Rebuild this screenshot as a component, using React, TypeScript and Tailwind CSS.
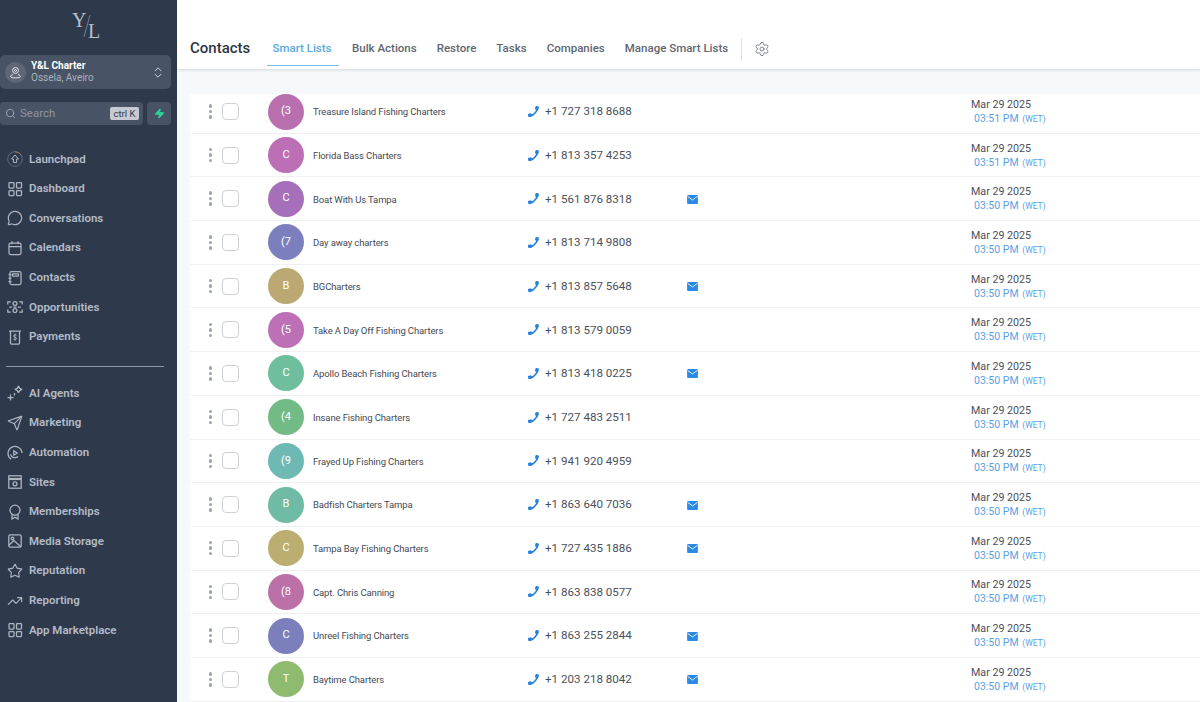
import React from 'react'
import { ChevronsUpDown, MessageCircle, Search, Send, Settings, Star, TrendingUp, Zap } from 'lucide-react'

const ICON = 'w-[16px] h-[16px] shrink-0 text-[#aeb6c2]'

const Svg = ({ children }: { children: React.ReactNode }): JSX.Element => (
  <svg viewBox="0 0 16 16" fill="none" stroke="currentColor" strokeWidth="1.25" className={ICON}>
    {children}
  </svg>
)

const Grid = (): JSX.Element => (
  <Svg>
    <rect x="2" y="1.5" width="5" height="5.5" rx="0.8" />
    <rect x="9.5" y="1.5" width="5" height="5.5" rx="0.8" />
    <rect x="2" y="9.5" width="5" height="5" rx="0.8" />
    <rect x="9.5" y="9.5" width="5" height="5" rx="0.8" />
  </Svg>
)

const topNav: [string, React.ReactNode][] = [
  [
    'Launchpad',
    <Svg>
      <circle cx="8" cy="8" r="7.3" stroke="#6b7485" strokeWidth="0.8" />
      <path d="M8 .7a7.3 7.3 0 0 1 6.4 3.8" stroke="#c77b3e" strokeWidth="0.8" />
      <path d="M8 4 11.5 8H9.6v3.5H6.4V8H4.5z" strokeWidth="1" />
    </Svg>
  ],
  ['Dashboard', <Grid />],
  ['Conversations', <MessageCircle className={ICON} strokeWidth={1.8} />],
  [
    'Calendars',
    <Svg>
      <rect x="2" y="3" width="12" height="11.5" rx="1.5" />
      <path d="M2 6.5h12M5 1.2v3M11 1.2v3" />
    </Svg>
  ],
  [
    'Contacts',
    <Svg>
      <rect x="3" y="1.5" width="11" height="13" rx="1.5" />
      <rect x="5.5" y="3.8" width="6" height="2.4" rx="0.5" />
      <path d="M1.5 4.5h3M1.5 8h3M1.5 11.5h3" />
    </Svg>
  ],
  [
    'Opportunities',
    <Svg>
      <circle cx="8" cy="4.4" r="1.9" />
      <circle cx="8" cy="11.6" r="1.9" />
      <path d="M6.4 8h3.2M.8 5.5V2.8h3M.8 10.5v2.700h3M15.200 5.500V2.800h-3M15.200 10.500v2.700h-3M2.200 8H5M11 8h2.800" />
    </Svg>
  ],
  [
    'Payments',
    <Svg>
      <path d="M2 2h12M3.5 2v12a1 1 0 0 0 1 1h7a1 1 0 0 0 1-1V2" />
      <path d="M9.6 6.200C9 5.500 6.500 5.400 6.500 7c0 1.600 3.100.9 3.100 2.500 0 1.500-2.600 1.400-3.200.6M8 4.600v7" strokeWidth="0.9" />
    </Svg>
  ]
]

const bottomNav: [string, React.ReactNode][] = [
  [
    'AI Agents',
    <Svg>
      <path d="M11.500.8c.4 2.200 1.300 3.100 3.700 3.600-2.400.5-3.300 1.400-3.700 3.600-.4-2.200-1.300-3.100-3.700-3.600 2.400-.5 3.300-1.400 3.700-3.600z" />
      <path d="M3.500 9.500v6M.5 12.500h6M7.500 8v2.400" />
    </Svg>
  ],
  ['Marketing', <Send className={ICON} strokeWidth={1.7} />],
  [
    'Automation',
    <Svg>
      <path d="M4.200 14.300A7 7 0 1 1 15 8" />
      <path d="M3.500 9.500a4.600 4.600 0 0 0 7.500 2" />
      <path d="M6.800 5.800 10.200 8l-3.400 2.200z" />
    </Svg>
  ],
  [
    'Sites',
    <Svg>
      <rect x="1.800" y="1.800" width="12.400" height="12.400" />
      <path d="M1.800 5h12.400" strokeWidth="2.200" />
      <circle cx="8" cy="9.800" r="2" />
    </Svg>
  ],
  [
    'Memberships',
    <Svg>
      <circle cx="8" cy="6.200" r="5" />
      <path d="M5 10.400V15l3-1.800 3 1.800v-4.600" />
    </Svg>
  ],
  [
    'Media Storage',
    <Svg>
      <rect x="1.800" y="1.800" width="12.400" height="12.400" rx="1.500" />
      <circle cx="5.500" cy="5.500" r="1.300" />
      <path d="m2 12 5-4.500 7 6.500" />
    </Svg>
  ],
  ['Reputation', <Star className={ICON} strokeWidth={1.7} />],
  ['Reporting', <TrendingUp className={ICON} strokeWidth={1.7} />],
  ['App Marketplace', <Grid />]
]

const rows = [
  ['(3', 'bg-[#b96fae]', 'Treasure Island Fishing Charters', '+1 727 318 8688', false, '03:51 PM'],
  ['C', 'bg-[#bd6fb5]', 'Florida Bass Charters', '+1 813 357 4253', false, '03:51 PM'],
  ['C', 'bg-[#a66fb9]', 'Boat With Us Tampa', '+1 561 876 8318', true, '03:50 PM'],
  ['(7', 'bg-[#7c7fbe]', 'Day away charters', '+1 813 714 9808', false, '03:50 PM'],
  ['B', 'bg-[#bba872]', 'BGCharters', '+1 813 857 5648', true, '03:50 PM'],
  ['(5', 'bg-[#bd70b5]', 'Take A Day Off Fishing Charters', '+1 813 579 0059', false, '03:50 PM'],
  ['C', 'bg-[#6fbf9f]', 'Apollo Beach Fishing Charters', '+1 813 418 0225', true, '03:50 PM'],
  ['(4', 'bg-[#72bb85]', 'Insane Fishing Charters', '+1 727 483 2511', false, '03:50 PM'],
  ['(9', 'bg-[#6fb9b5]', 'Frayed Up Fishing Charters', '+1 941 920 4959', false, '03:50 PM'],
  ['B', 'bg-[#6fbba5]', 'Badfish Charters Tampa', '+1 863 640 7036', true, '03:50 PM'],
  ['C', 'bg-[#bbae70]', 'Tampa Bay Fishing Charters', '+1 727 435 1886', true, '03:50 PM'],
  ['(8', 'bg-[#bb70a8]', 'Capt. Chris Canning', '+1 863 838 0577', false, '03:50 PM'],
  ['C', 'bg-[#7b80bd]', 'Unreel Fishing Charters', '+1 863 255 2844', true, '03:50 PM'],
  ['T', 'bg-[#8fbb70]', 'Baytime Charters', '+1 203 218 8042', true, '03:50 PM']
] as const

const tabs = ['Bulk Actions', 'Restore', 'Tasks', 'Companies', 'Manage Smart Lists']

const NavItem = ({ label, icon }: { label: string; icon: React.ReactNode }): JSX.Element => (
  <div className="flex items-center h-[29.6px] pl-[7px] gap-[6px]">
    {icon}
    <span className="text-[11.5px] font-semibold text-[#b4bbc7]">{label}</span>
  </div>
)

const Sidebar = (): JSX.Element => (
  <aside className="w-[177px] h-full shrink-0 bg-[#2e3a4c] flex flex-col">
    <div className="h-[55px] flex justify-center pt-[8px] pl-[3px]">
      <svg viewBox="0 0 40 34" className="w-[40px] h-[34px] text-[#b9bfc9]" fill="currentColor">
        <text x="2" y="19" fontFamily="'Liberation Serif', serif" fontSize="20">Y</text>
        <path d="M20 7 14 29" stroke="currentColor" strokeWidth="0.5" />
        <text x="18" y="30" fontFamily="'Liberation Serif', serif" fontSize="20">L</text>
      </svg>
    </div>
    <div className="w-[171px] h-[34px] rounded-[5px] bg-[#485365] flex items-center pl-[5px] pr-[6px]">
      <div className="w-[21px] h-[21px] rounded-full bg-[#5d6777] flex items-center justify-center">
        <svg viewBox="0 0 16 16" fill="none" stroke="#e4e7ec" strokeWidth="1.2" className="w-[13px] h-[13px]">
          <circle cx="8" cy="5.500" r="3.600" />
          <circle cx="8" cy="5.500" r="1.200" />
          <path d="M5 10.500c-2 .6-3 1.500-3 2.500s2 1.600 6 1.600 6-.6 6-1.600-1-1.900-3-2.500" />
        </svg>
      </div>
      <div className="ml-[5px] flex-1 flex flex-col leading-[12.5px]">
        <span className="text-[10px] font-bold text-white">Y&amp;L Charter</span>
        <span className="text-[10px] text-[#aab2be]">Ossela, Aveiro</span>
      </div>
      <ChevronsUpDown className="w-[14px] h-[17px] text-[#cdd2da]" strokeWidth={1.7} />
    </div>
    <div className="mt-[13px] flex w-[171px] gap-[4px]">
      <div className="w-[143px] h-[23px] rounded-[4px] bg-[#485365] flex items-center pl-[5px] pr-[4px]">
        <Search className="w-[11px] h-[11px] text-[#a4acb9]" strokeWidth={2} />
        <span className="ml-[4px] flex-1 text-[11.5px] text-[#8d96a5]">Search</span>
        <span className="w-[29px] h-[13px] rounded-[2px] bg-[#c6cbd3] text-[#2e3a4c] text-[9.5px] leading-[13px] text-center">ctrl K</span>
      </div>
      <div className="w-[24px] h-[23px] rounded-[4px] bg-[#485365] flex items-center justify-center">
        <Zap className="w-[11px] h-[11px] text-[#2fd09c]" fill="#2fd09c" />
      </div>
    </div>
    <nav className="mt-[19.5px]">
      {topNav.map(([label, icon]) => (
        <NavItem key={label} label={label} icon={icon} />
      ))}
    </nav>
    <div className="ml-[6px] mt-[14px] mb-[12px] w-[158px] h-px bg-[#8e97a4]" />
    <nav>
      {bottomNav.map(([label, icon]) => (
        <NavItem key={label} label={label} icon={icon} />
      ))}
    </nav>
  </aside>
)

const Header = (): JSX.Element => (
  <header className="h-[70px] shrink-0 bg-white border-b border-[#e2e5e8] shadow-[0_1px_2px_rgba(0,0,0,0.08)] flex pl-[13px] pt-[32px]">
    <h1 className="w-[77px] text-[15px] leading-[32px] font-medium text-[#2f3644]">Contacts</h1>
    <div className="w-[72px] h-[34px] border-b border-[#7dbde3] text-center text-[11.5px] leading-[33px] font-medium text-[#5aa9dc] pr-[2px]">
      Smart Lists
    </div>
    <div className="ml-[13px] flex gap-[20px] text-[11.5px] leading-[33px] font-medium text-[#5f6670]">
      {tabs.map((tab) => (
        <span key={tab}>{tab}</span>
      ))}
    </div>
    <div className="ml-[13px] mt-[6px] w-px h-[23px] bg-[#dfe2e6]" />
    <Settings className="ml-[12px] mt-[9px] w-[16px] h-[16px] text-[#6b7280]" strokeWidth={1.3} />
  </header>
)

const Row = ({ row, first }: { row: (typeof rows)[number]; first: boolean }): JSX.Element => {
  const [initials, colour, name, phone, email, time] = row
  return (
    <div className={`flex items-center border-b border-[#eef0f2] bg-white ${first ? 'h-[39.7px] pb-[3.7px]' : 'h-[43.7px]'}`}>
      <div className="w-[17px] ml-[12px] flex flex-col items-center gap-[2px]">
        <span className="w-[3.5px] h-[3.5px] rounded-full bg-[#9aa5ad]" />
        <span className="w-[3.5px] h-[3.5px] rounded-full bg-[#9aa5ad]" />
        <span className="w-[3.5px] h-[3.5px] rounded-full bg-[#9aa5ad]" />
      </div>
      <span className="ml-[3px] w-[17px] h-[17px] rounded-[4px] border border-[#cdd1d6] bg-white" />
      <div className={`ml-[29px] w-[36px] h-[36px] rounded-full ${colour} flex items-center justify-center text-white text-[11px]`}>
        {initials}
      </div>
      <span className="ml-[9px] w-[214px] pt-[2px] text-[9.5px] tracking-[-0.12px] text-[#444a53]">{name}</span>
      <svg viewBox="0 0 24 24" fill="#2b82dc" className="w-[13px] h-[13px]">
        <path d="M21 2.500c-.3-.3-4.500-1-4.800-.5l-1.700 5c0 .4 2 1.800 2.200 2.200-.6 2.200-5.600 7.500-7.500 7.800-.5-.2-1.800-2-2.200-2l-5 1.700c-.5.3.1 4.400.5 4.800.4.4 3 .8 5.500 0C13 20 20.300 12 22 5.500c.2-1.300-.6-2.700-1-3z" />
      </svg>
      <span className="ml-[5px] w-[142px] pt-px text-[11.6px] text-[#4b5059]">{phone}</span>
      <div className="w-[284px] pt-px">
        {email && (
          <svg viewBox="0 0 12 10" className="w-[11px] h-[9px]">
            <rect width="12" height="10" rx="1" fill="#2b8ae6" />
            <path d="M.5 1.500 6 5.500l5.500-4" stroke="#fff" strokeWidth="1" fill="none" />
          </svg>
        )}
      </div>
      <div className="flex flex-col pt-px leading-[14px]">
        <span className="text-[10.7px] text-[#4b5059]">Mar 29 2025</span>
        <span className="ml-[3px] text-[10.5px] text-[#5a9fe6]">
          {time} <span className="ml-[1px] text-[8.5px]">(WET)</span>
        </span>
      </div>
    </div>
  )
}

export default function App(): JSX.Element {
  return (
    <div className="w-[1200px] h-[702px] overflow-hidden flex bg-[#f6f9fb] font-['Roboto',sans-serif]">
      <Sidebar />
      <main className="flex-1 flex flex-col">
        <Header />
        <div className="pt-[24px] pl-[13px]">
          {rows.map((row, i) => (
            <Row key={row[2]} row={row} first={i === 0} />
          ))}
        </div>
      </main>
    </div>
  )
}
